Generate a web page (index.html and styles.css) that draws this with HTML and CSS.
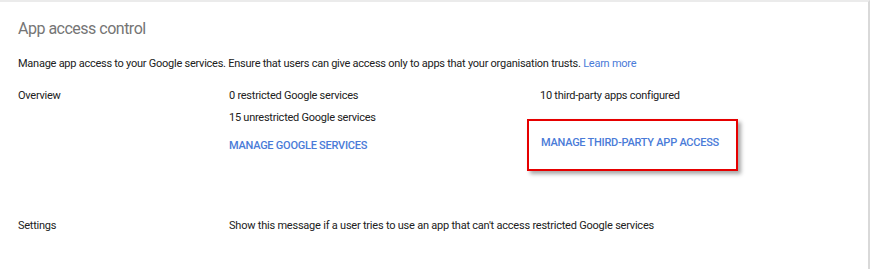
FILE: index.html
```html
<!DOCTYPE html>
<html lang="en">
<head>
    <meta charset="UTF-8">
    <title>App access control</title>
    <link rel="stylesheet" href="styles.css">
</head>
<body>
    <div class="card">
        <h1 class="card-title">App access control</h1>
        <p class="card-desc">Manage app access to your Google services. Ensure that users can give access only to apps that your organisation trusts. <a href="#" class="link">Learn more</a></p>

        <div class="row overview">
            <div class="row-label">Overview</div>
            <div class="col">
                <div class="stat">0 restricted Google services</div>
                <div class="stat">15 unrestricted Google services</div>
                <a href="#" class="action">MANAGE GOOGLE SERVICES</a>
            </div>
            <div class="col">
                <div class="stat">10 third-party apps configured</div>
                <div class="highlight">
                    <a href="#" class="action">MANAGE THIRD-PARTY APP ACCESS</a>
                </div>
            </div>
        </div>

        <div class="row settings">
            <div class="row-label">Settings</div>
            <div class="col settings-text">Show this message if a user tries to use an app that can't access restricted Google services</div>
        </div>
    </div>
</body>
</html>
```

FILE: styles.css
```css
:root {
    --text-color: #212121;
    --muted: #757575;
    --blue: #4a7bd8;
    --border: #e0e0e0;
}

body {
    margin: 0;
    font-family: Roboto, Arial, sans-serif;
    background-color: #fff;
    color: var(--text-color);
}

.card {
    height: 269px;
    box-sizing: border-box;
    margin-right: 1px;
    border-top: 2px solid #ebebeb;
    border-right: 2px solid #d9d9d9;
    padding: 0 18px;
    overflow: hidden;
}

.card-title {
    margin: 16px 0 0;
    font-size: 16px;
    letter-spacing: -0.5px;
    font-weight: 400;
    line-height: 22px;
    color: var(--muted);
}

.card-desc {
    margin: 16px 0 0;
    font-size: 11px;
    letter-spacing: -0.25px;
    line-height: 16px;
}

.link {
    color: var(--blue);
    text-decoration: none;
}

.row {
    display: grid;
    grid-template-columns: 211px 311px 1fr;
    font-size: 11px;
    letter-spacing: -0.25px;
    line-height: 16px;
}

.overview {
    margin-top: 16px;
}

.stat {
    margin-bottom: 6px;
}

.action {
    display: inline-block;
    color: var(--blue);
    font-weight: 500;
    text-decoration: none;
    white-space: nowrap;
    margin-top: 6px;
}

.highlight {
    width: 211px;
    height: 52px;
    box-sizing: border-box;
    margin: 15px 0 0 -13px;
    padding: 14px 0 0 12px;
    border: 2px solid #e60000;
    box-shadow: 3px 3px 4px rgba(0, 0, 0, 0.35);
}

.highlight .action {
    margin-top: 0;
}

.settings {
    margin-top: 47px;
}

.settings-text {
    grid-column: 2 / 4;
    letter-spacing: -0.22px;
}
```
